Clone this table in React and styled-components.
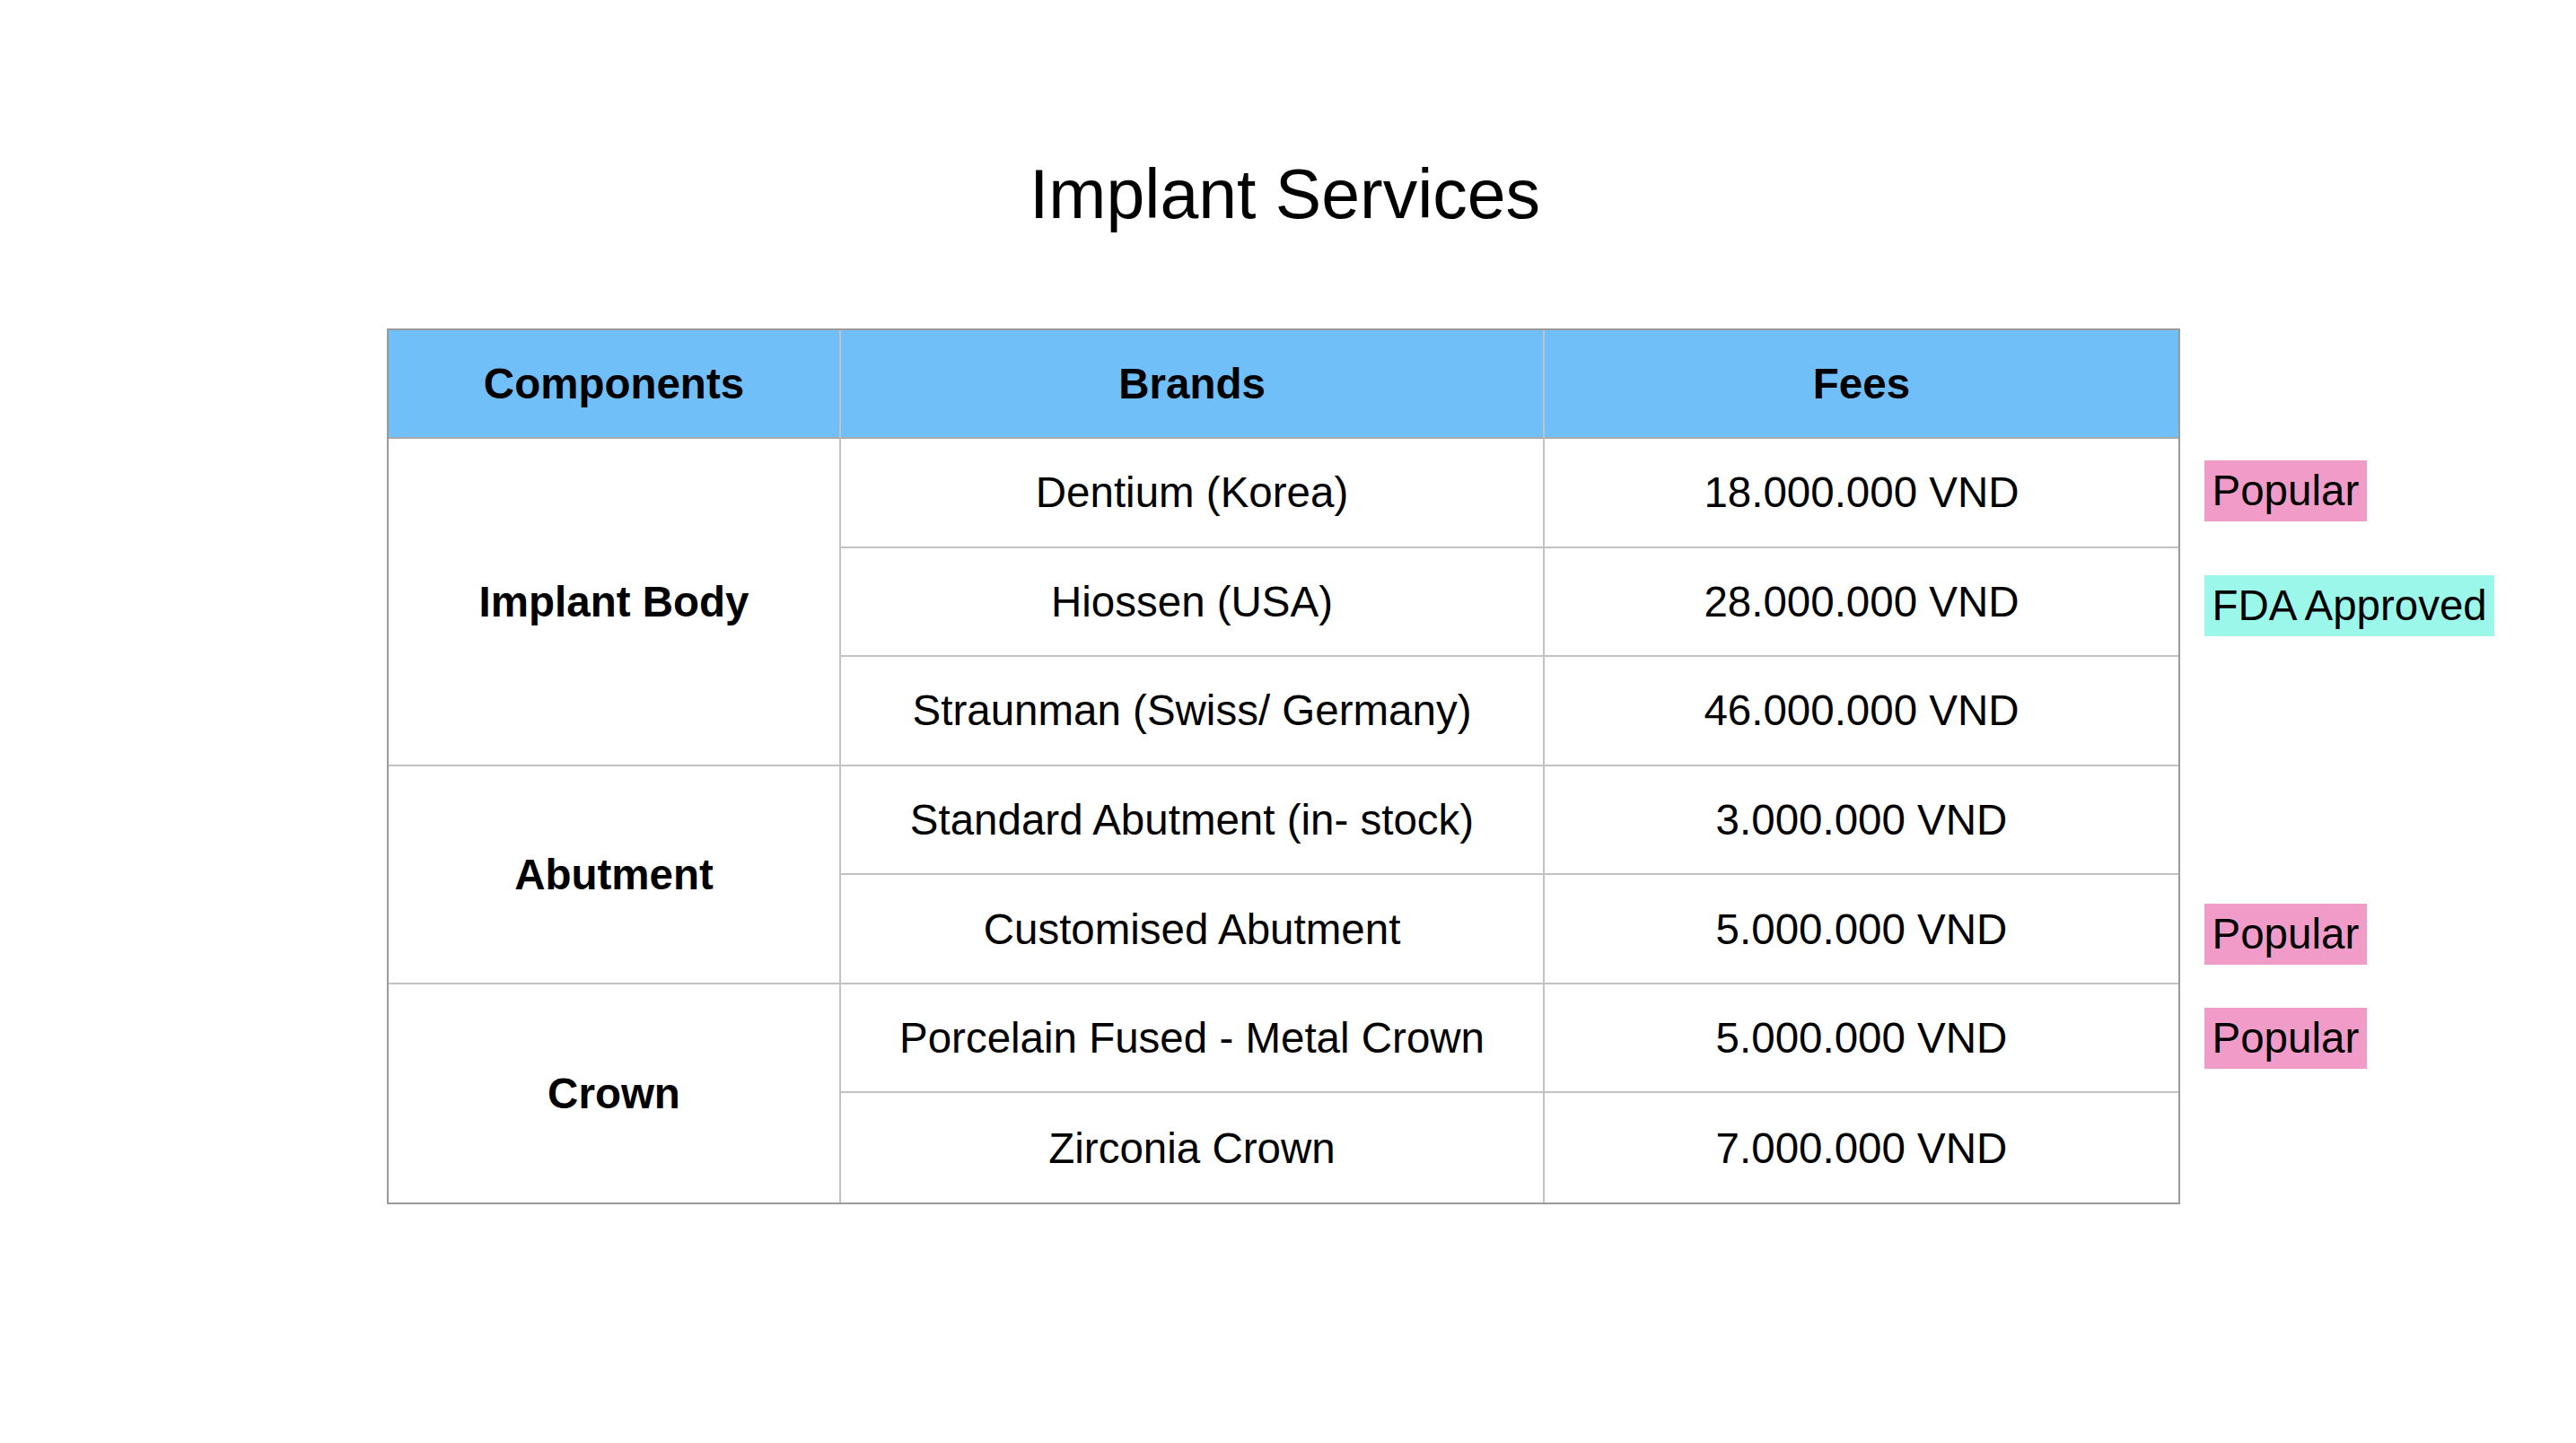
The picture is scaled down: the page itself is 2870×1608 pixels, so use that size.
import React from "react";
import styled, { createGlobalStyle } from "styled-components";

const GlobalStyle = createGlobalStyle`
  html, body {
    margin: 0;
    padding: 0;
    background: #ffffff;
  }
  body {
    font-family: "Liberation Sans", Arial, Helvetica, sans-serif;
    color: #000000;
  }
`;

const Slide = styled.div`
  width: 2870px;
  height: 1608px;
  display: flex;
  flex-direction: column;
  background: #ffffff;
  overflow: hidden;
`;

const Title = styled.h1`
  margin: 178px 0 0 0;
  padding-right: 7px;
  font-family: "Liberation Sans", Arial, sans-serif;
  font-weight: 400;
  font-size: 77px;
  line-height: 76px;
  text-align: center;
  color: #000000;
  letter-spacing: 0;
`;

const Content = styled.div`
  display: flex;
  flex-direction: row;
  align-items: flex-start;
  gap: 27px;
  margin-top: 112px;
  padding-left: 431px;
`;

const TableGrid = styled.div`
  display: grid;
  grid-template-columns: 504px 784px 706px;
  grid-template-rows: 121px repeat(7, 1fr);
  height: 972px;
  border: 2px solid #9a9a9a;
`;

const Cell = styled.div`
  display: flex;
  align-items: center;
  justify-content: center;
  text-align: center;
  font-family: "Liberation Sans", Arial, sans-serif;
  font-size: 47.5px;
  font-weight: ${(p) => (p.$bold ? 700 : 400)};
  color: #000000;
  background: ${(p) => (p.$head ? "#71bff8" : "#ffffff")};
  border-right: ${(p) => (p.$lastCol ? "none" : "2px solid #c2c2c2")};
  border-bottom: ${(p) => (p.$lastRow ? "none" : "2px solid #c2c2c2")};
  grid-row: ${(p) => (p.$span ? `span ${p.$span}` : "auto")};
  white-space: nowrap;
`;

const HeadCell = styled(Cell)`
  border-bottom-color: #a9a9a9;
`;

const TagColumn = styled.div`
  display: grid;
  grid-template-rows: 121px repeat(7, 1fr);
  height: 972px;
  margin-top: 2px;
`;

const Tag = styled.span`
  grid-row: ${(p) => p.$row};
  align-self: center;
  justify-self: start;
  margin-top: ${(p) => p.$shift || 0}px;
  height: 68px;
  line-height: 68px;
  padding: 0 8.5px;
  font-family: "Liberation Sans", Arial, sans-serif;
  font-size: 47.5px;
  color: #000000;
  background: ${(p) => (p.$kind === "fda" ? "#9bf7ea" : "#f19bc8")};
  white-space: nowrap;
`;

const groups = [
  {
    name: "Implant Body",
    items: [
      ["Dentium (Korea)", "18.000.000 VND"],
      ["Hiossen (USA)", "28.000.000 VND"],
      ["Straunman (Swiss/ Germany)", "46.000.000 VND"],
    ],
  },
  {
    name: "Abutment",
    items: [
      ["Standard Abutment (in- stock)", "3.000.000 VND"],
      ["Customised Abutment", "5.000.000 VND"],
    ],
  },
  {
    name: "Crown",
    items: [
      ["Porcelain Fused - Metal Crown", "5.000.000 VND"],
      ["Zirconia Crown", "7.000.000 VND"],
    ],
  },
];

const tags = [
  { row: 2, label: "Popular", kind: "popular", shift: -6 },
  { row: 3, label: "FDA Approved", kind: "fda", shift: 8 },
  { row: 6, label: "Popular", kind: "popular", shift: 10 },
  { row: 7, label: "Popular", kind: "popular", shift: -2 },
];

export default function App() {
  return (
    <>
      <GlobalStyle />
      <Slide>
        <Title>Implant Services</Title>
        <Content>
          <TableGrid>
            <HeadCell $head $bold>Components</HeadCell>
            <HeadCell $head $bold>Brands</HeadCell>
            <HeadCell $head $bold $lastCol>Fees</HeadCell>
            {groups.map((g, gi) => {
              const lastGroup = gi === groups.length - 1;
              return (
                <React.Fragment key={g.name}>
                  <Cell $bold $span={g.items.length} $lastRow={lastGroup}>
                    {g.name}
                  </Cell>
                  {g.items.map(([brand, fee], ii) => {
                    const lastRow = lastGroup && ii === g.items.length - 1;
                    return (
                      <React.Fragment key={brand}>
                        <Cell $lastRow={lastRow}>{brand}</Cell>
                        <Cell $lastRow={lastRow} $lastCol>
                          {fee}
                        </Cell>
                      </React.Fragment>
                    );
                  })}
                </React.Fragment>
              );
            })}
          </TableGrid>
          <TagColumn>
            {tags.map((t) => (
              <Tag key={t.row} $row={t.row} $kind={t.kind} $shift={t.shift}>
                {t.label}
              </Tag>
            ))}
          </TagColumn>
        </Content>
      </Slide>
    </>
  );
}
